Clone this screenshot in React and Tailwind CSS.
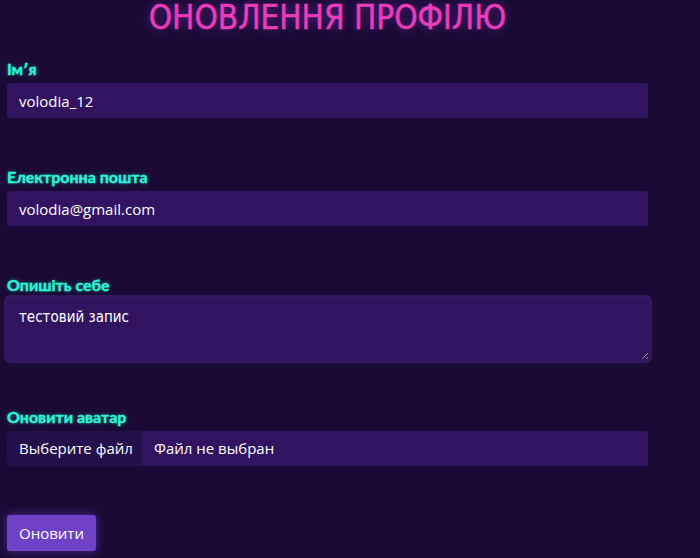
import React from "react";

const labelCls = "block text-[16px] leading-[18px] font-bold text-[#2ef3d6] [font-family:Lato,sans-serif] [-webkit-text-stroke:0.4px_#2ef3d6] [text-shadow:0_0_4px_rgba(46,243,214,0.5)]";
const inputCls = "block w-[641px] h-[35px] rounded-[3px] bg-[#311360] px-[12px] text-[15px] text-white [font-family:'Open_Sans',sans-serif] outline-none";

export default function App() {
  return (
    <div className="w-[700px] h-[558px] bg-[#1b0a35] overflow-hidden">
      <div className="pl-[7px] w-[648px]">
        <h1 className="w-[641px] pt-[1px] text-center text-[33px] leading-[34px] text-[#e93cb8] [font-family:'DejaVu_Sans_Condensed','Liberation_Sans',sans-serif] [-webkit-text-stroke:0.5px_#e93cb8] [text-shadow:0_0_10px_rgba(140,60,220,0.6)]">
          ОНОВЛЕННЯ ПРОФІЛЮ
        </h1>
        <div className="mt-[25px]">
          <label className={labelCls}>Ім′я</label>
          <input className={inputCls + " mt-[5px]"} defaultValue="volodia_12" />
        </div>
        <div className="mt-[50px]">
          <label className={labelCls}>Електронна пошта</label>
          <input className={inputCls + " mt-[5px]"} defaultValue="volodia@gmail.com" />
        </div>
        <div className="mt-[50px]">
          <label className={labelCls}>Опишіть себе</label>
          <textarea
            className="block -ml-[3px] mt-[1px] w-[648px] h-[68px] rounded-[6px] bg-[#311360] px-[12px] pt-[8px] text-[15px] text-white [font-family:'DejaVu_Sans_Condensed',sans-serif] outline-none border-[3px] border-[#34175f] resize-y"
            defaultValue="тестовий запис"
          />
        </div>
        <div className="mt-[45px]">
          <label className={labelCls}>Оновити аватар</label>
          <div className="mt-[5px] flex w-[641px] h-[35px] rounded-[3px] overflow-hidden bg-[#311360] text-[15px] text-white [font-family:'Open_Sans',sans-serif]">
            <div className="w-[135px] shrink-0 bg-[#24104a] flex items-center pl-[12px]">Выберите файл</div>
            <div className="flex items-center pl-[12px]">Файл не выбран</div>
          </div>
        </div>
        <button className="mt-[49px] h-[36px] px-[12px] rounded-[3px] bg-[#6f41c6] text-white text-[15px] [font-family:'Open_Sans',sans-serif] shadow-[0_0_10px_rgba(120,70,220,0.6)]">
          Оновити
        </button>
      </div>
    </div>
  );
}
